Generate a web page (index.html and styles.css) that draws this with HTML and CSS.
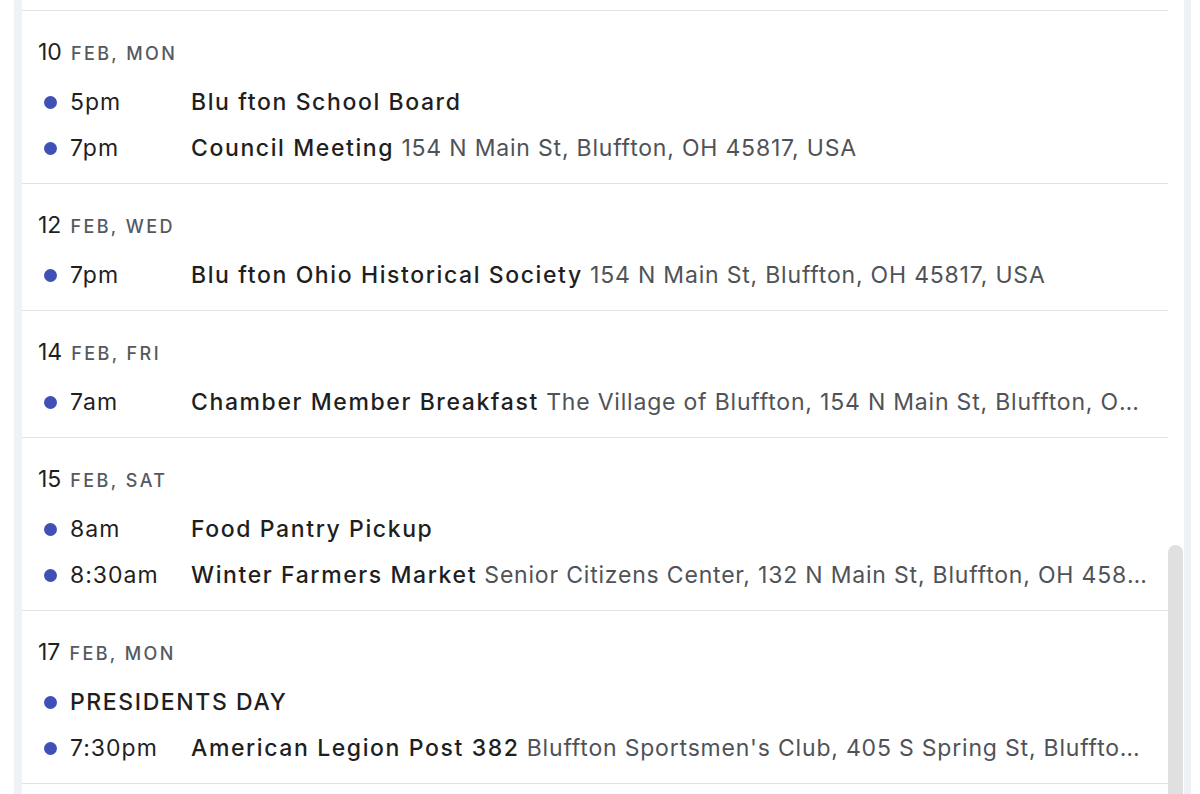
FILE: index.html
```html
<!DOCTYPE html>
<html>
<head>
<meta charset="utf-8">
<link rel="stylesheet" href="styles.css">
</head>
<body>
<div class="frame">
  <div class="list">
    <div class="day day-cut"></div>

    <div class="day">
      <div class="date"><span class="num">10</span><span class="mon">FEB, MON</span></div>
      <div class="event"><span class="dot"></span><span class="time">5pm</span><span class="info"><b>Blu fton School Board</b></span></div>
      <div class="event"><span class="dot"></span><span class="time">7pm</span><span class="info"><b>Council Meeting</b> 154 N Main St, Bluffton, OH 45817, USA</span></div>
    </div>

    <div class="day">
      <div class="date"><span class="num">12</span><span class="mon">FEB, WED</span></div>
      <div class="event"><span class="dot"></span><span class="time">7pm</span><span class="info"><b>Blu fton Ohio Historical Society</b> 154 N Main St, Bluffton, OH 45817, USA</span></div>
    </div>

    <div class="day">
      <div class="date"><span class="num">14</span><span class="mon">FEB, FRI</span></div>
      <div class="event"><span class="dot"></span><span class="time">7am</span><span class="info"><b>Chamber Member Breakfast</b> The Village of Bluffton, 154 N Main St, Bluffton, OH 45817, USA</span></div>
    </div>

    <div class="day">
      <div class="date"><span class="num">15</span><span class="mon">FEB, SAT</span></div>
      <div class="event"><span class="dot"></span><span class="time">8am</span><span class="info"><b>Food Pantry Pickup</b></span></div>
      <div class="event"><span class="dot"></span><span class="time">8:30am</span><span class="info"><b>Winter Farmers Market</b> Senior Citizens Center, 132 N Main St, Bluffton, OH 45817, USA</span></div>
    </div>

    <div class="day day-two-last">
      <div class="date"><span class="num">17</span><span class="mon">FEB, MON</span></div>
      <div class="event"><span class="dot"></span><span class="info allday"><b>PRESIDENTS DAY</b></span></div>
      <div class="event"><span class="dot"></span><span class="time">7:30pm</span><span class="info"><b>American Legion Post 382</b> Bluffton Sportsmen's Club, 405 S Spring St, Bluffton, OH 45817, USA</span></div>
    </div>

    <div class="day day-next"></div>
  </div>
  <div class="scrollbar"><div class="thumb"></div></div>
</div>
</body>
</html>
```

FILE: styles.css
```css
html, body {
  margin: 0;
  padding: 0;
  height: 794px;
  overflow: hidden;
  background: #ffffff;
}

body {
  font-family: Inter, "Noto Sans", sans-serif;
  color: #1f1f1f;
}

.frame {
  display: flex;
  margin-left: 14px;
  width: 1162px;
  height: 794px;
  padding: 0 7px 0 8px;
  background: #eef2f7;
  overflow: hidden;
}

.list {
  flex: 1;
  background: #ffffff;
  min-width: 0;
}

.day {
  border-bottom: 1px solid #dfe3e8;
  padding: 23px 20px 12px 16px;
}

.day-cut {
  height: 10px;
  padding: 0;
}

.day-next {
  height: 40px;
}

.date {
  height: 36px;
  line-height: 36px;
  margin-bottom: 9px;
  white-space: nowrap;
}

.num {
  font-size: 23px;
  color: #1f1f1f;
}

.mon {
  margin-left: 9px;
  font-size: 18px;
  font-weight: 500;
  letter-spacing: 2.4px;
  color: #555a5f;
}

.event {
  display: flex;
  align-items: center;
  height: 46px;
  font-size: 23px;
  letter-spacing: 0.8px;
  white-space: nowrap;
}

.dot {
  flex: none;
  width: 13px;
  height: 13px;
  border-radius: 50%;
  background: #3f51b5;
  margin-left: 6px;
  margin-right: 13px;
}

.time {
  flex: none;
  width: 121px;
  letter-spacing: 1px;
  color: #1f1f1f;
}

.info {
  flex: 1;
  min-width: 0;
  overflow: hidden;
  text-overflow: ellipsis;
  color: #4f5357;
}

.info b {
  font-weight: 500;
  letter-spacing: 1.6px;
  color: #1f1f1f;
}

.scrollbar {
  flex: none;
  width: 16px;
  background: #ffffff;
}

.thumb {
  margin-top: 545px;
  width: 15px;
  height: 300px;
  background: #e0e0e0;
  border-radius: 8px 8px 0 0;
}
```
